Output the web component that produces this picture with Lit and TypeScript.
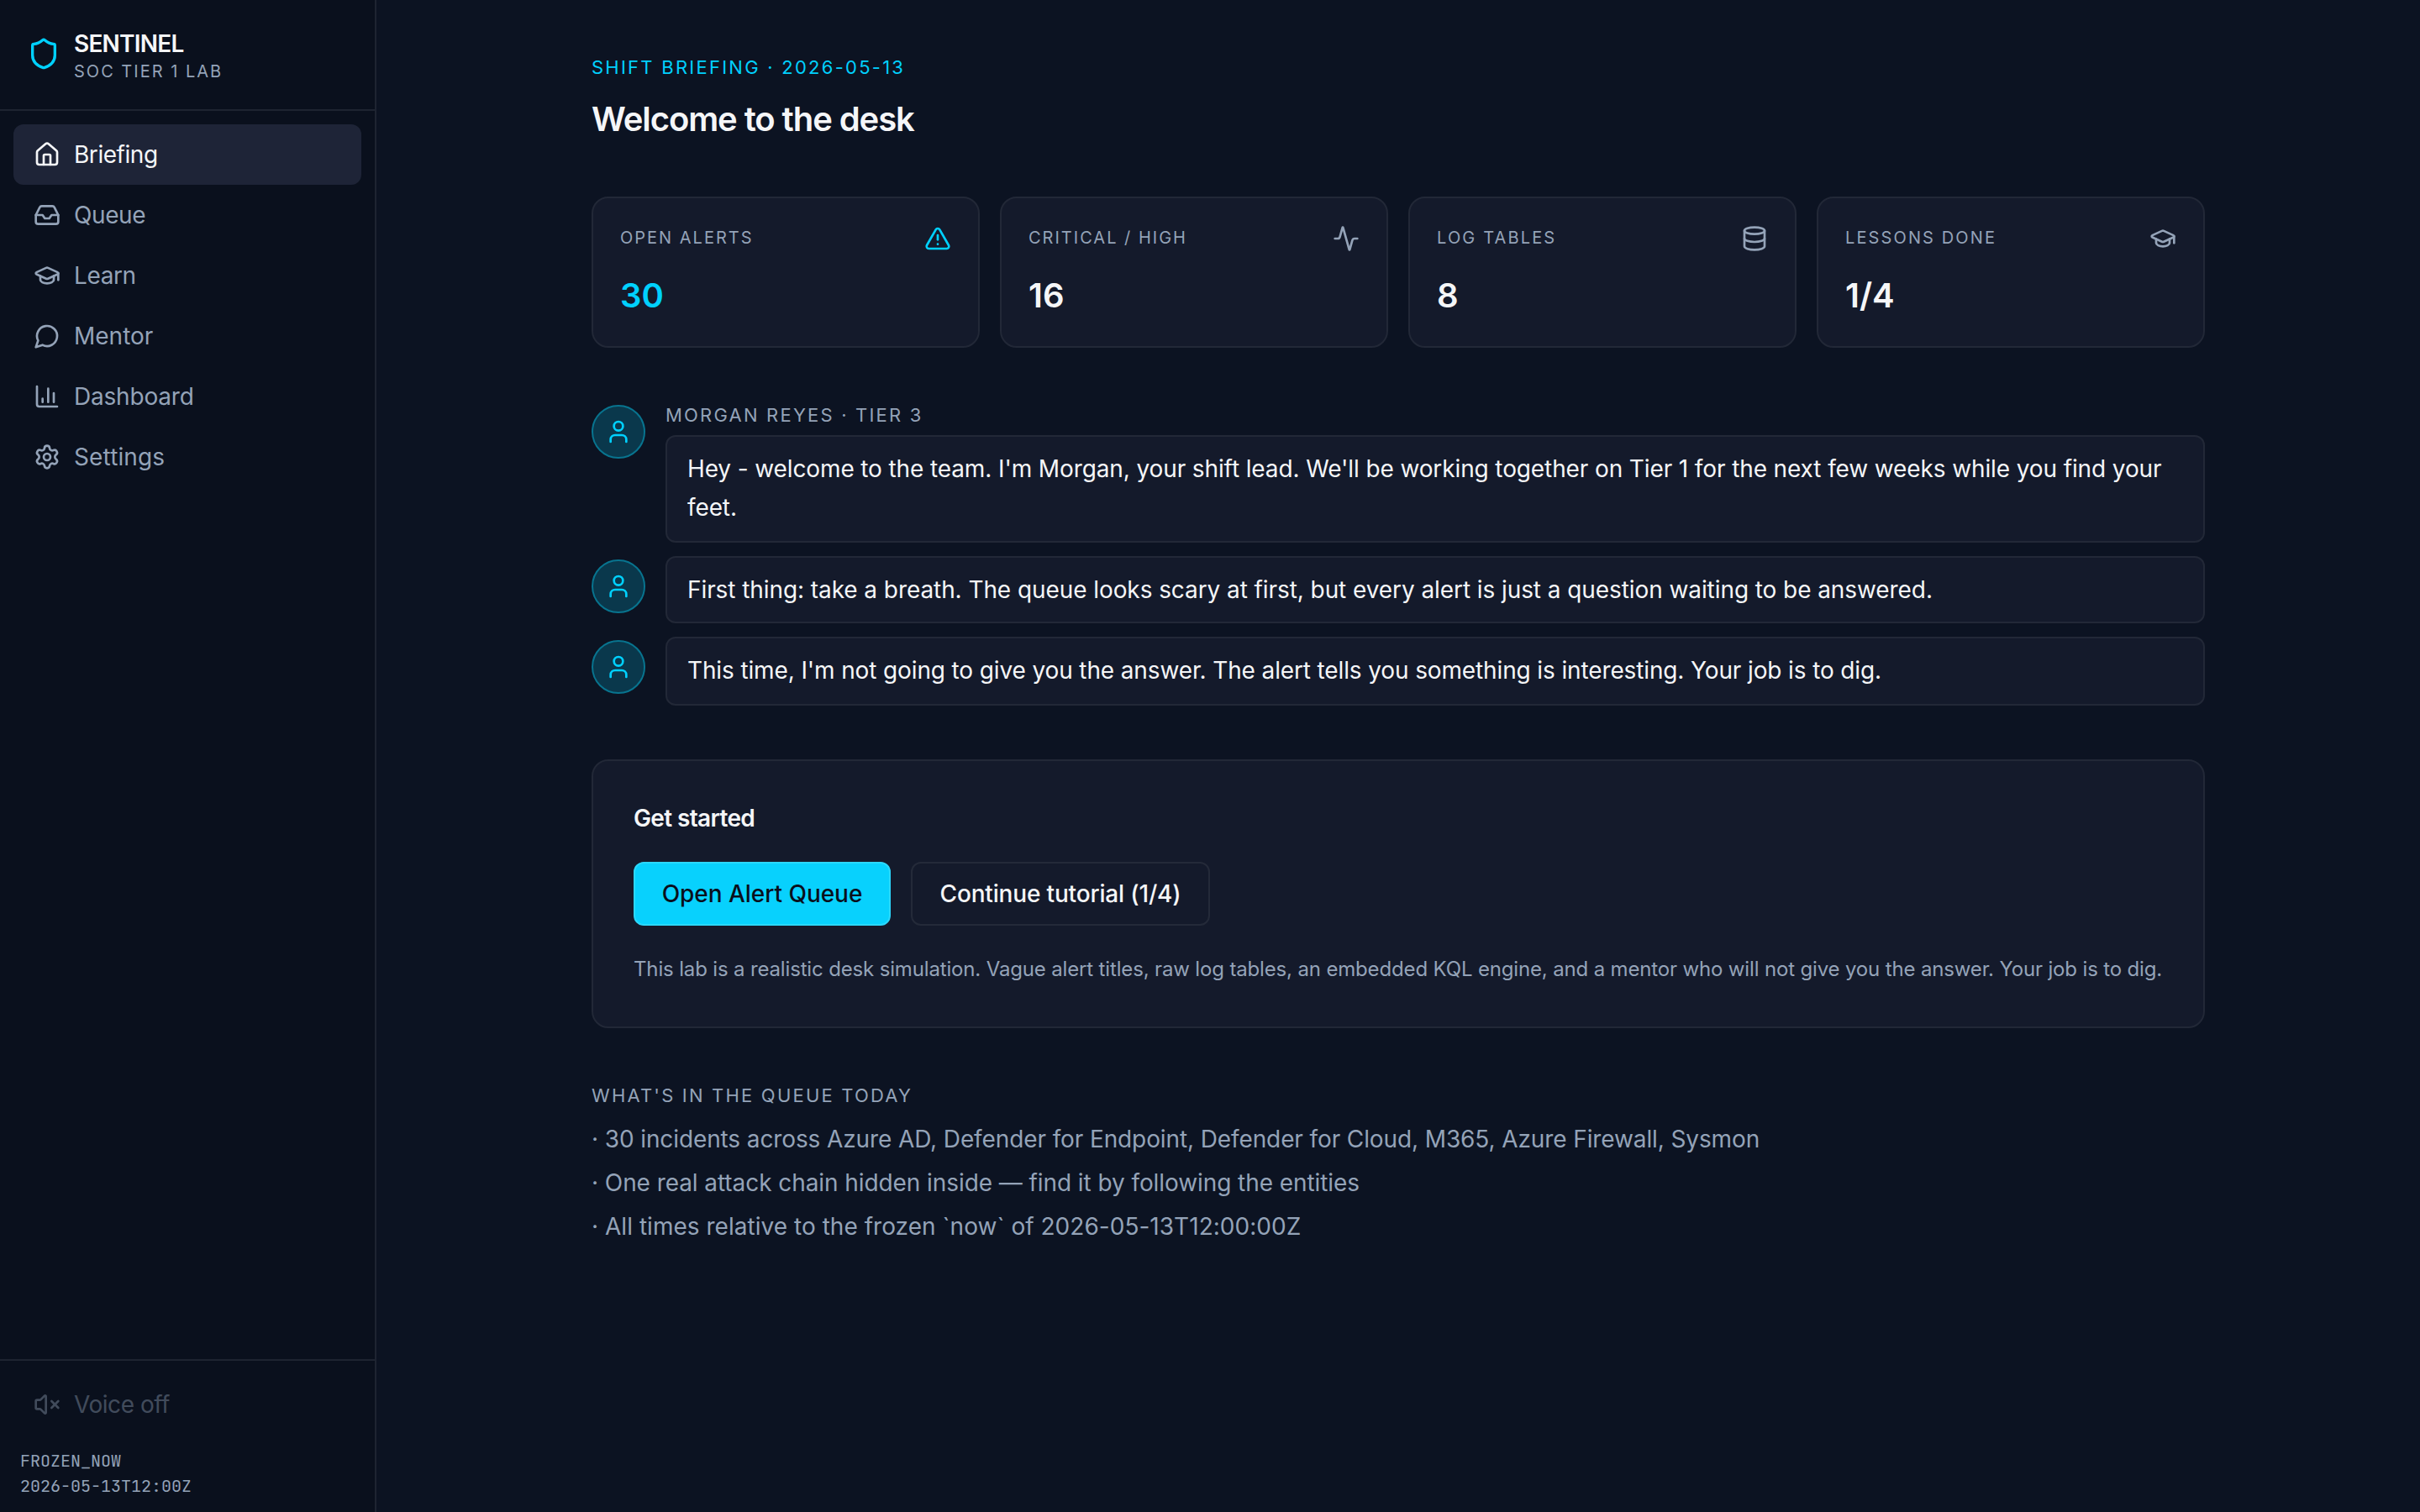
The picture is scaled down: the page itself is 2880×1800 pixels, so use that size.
import { LitElement, html, svg, css, type TemplateResult } from "lit";
import { customElement, property } from "lit/decorators.js";
import { classMap } from "lit/directives/class-map.js";
import { styleMap } from "lit/directives/style-map.js";

const icons: Record<string, TemplateResult> = {
  shield: svg`<path d="M20 13c0 5-3.5 7.5-7.66 8.95a1 1 0 0 1-.67-.01C7.5 20.5 4 18 4 13V6a1 1 0 0 1 1-1c2 0 4.5-1.2 6.24-2.72a1.17 1.17 0 0 1 1.52 0C14.51 3.81 17 5 19 5a1 1 0 0 1 1 1z"/>`,
  home: svg`<path d="M15 21v-8a1 1 0 0 0-1-1h-4a1 1 0 0 0-1 1v8"/><path d="M3 10a2 2 0 0 1 .709-1.528l7-5.999a2 2 0 0 1 2.582 0l7 5.999A2 2 0 0 1 21 10v9a2 2 0 0 1-2 2H5a2 2 0 0 1-2-2z"/>`,
  inbox: svg`<path d="M22 12h-6l-2 3h-4l-2-3H2"/><path d="M5.45 5.11 2 12v6a2 2 0 0 0 2 2h16a2 2 0 0 0 2-2v-6l-3.45-6.89A2 2 0 0 0 16.76 4H7.24a2 2 0 0 0-1.79 1.11z"/>`,
  cap: svg`<path d="M21.42 10.922a1 1 0 0 0-.019-1.838L12.83 5.18a2 2 0 0 0-1.66 0L2.6 9.08a1 1 0 0 0 0 1.832l8.57 3.908a2 2 0 0 0 1.66 0z"/><path d="M22 10v6"/><path d="M6 12.5V16a6 3 0 0 0 12 0v-3.5"/>`,
  chat: svg`<path d="M7.9 20A9 9 0 1 0 4 16.1L2 22Z"/>`,
  chart: svg`<path d="M3 3v16a2 2 0 0 0 2 2h16"/><path d="M18 17V9"/><path d="M13 17V5"/><path d="M8 17v-3"/>`,
  settings: svg`<path d="M9.671 4.136a2.34 2.34 0 0 1 4.659 0 2.34 2.34 0 0 0 3.319 1.915 2.34 2.34 0 0 1 2.33 4.033 2.34 2.34 0 0 0 0 3.831 2.34 2.34 0 0 1-2.33 4.033 2.34 2.34 0 0 0-3.319 1.915 2.34 2.34 0 0 1-4.659 0 2.34 2.34 0 0 0-3.32-1.915 2.34 2.34 0 0 1-2.33-4.033 2.34 2.34 0 0 0 0-3.831A2.34 2.34 0 0 1 6.35 6.051a2.34 2.34 0 0 0 3.319-1.915"/><circle cx="12" cy="12" r="3"/>`,
  mute: svg`<path d="M11 4.702a.705.705 0 0 0-1.203-.498L6.413 7.587A1.4 1.4 0 0 1 5.416 8H3a1 1 0 0 0-1 1v6a1 1 0 0 0 1 1h2.416a1.4 1.4 0 0 1 .997.413l3.383 3.384A.705.705 0 0 0 11 19.298z"/><path d="m22 9-6 6"/><path d="m16 9 6 6"/>`,
  alert: svg`<path d="m21.73 18-8-14a2 2 0 0 0-3.48 0l-8 14A2 2 0 0 0 4 21h16a2 2 0 0 0 1.73-3"/><path d="M12 9v4"/><path d="M12 17h.01"/>`,
  activity: svg`<path d="M22 12h-2.48a2 2 0 0 0-1.93 1.46l-2.35 8.36a.25.25 0 0 1-.48 0L9.24 2.18a.25.25 0 0 0-.48 0l-2.35 8.36A2 2 0 0 1 4.49 12H2"/>`,
  database: svg`<ellipse cx="12" cy="5" rx="9" ry="3"/><path d="M3 5v14a9 3 0 0 0 18 0V5"/><path d="M3 12a9 3 0 0 0 18 0"/>`,
  user: svg`<path d="M19 21v-2a4 4 0 0 0-4-4H9a4 4 0 0 0-4 4v2"/><circle cx="12" cy="7" r="4"/>`,
};

@customElement("line-icon")
class LineIcon extends LitElement {
  @property() name = "";

  static styles = css`
    :host {
      display: block;
      flex: none;
      width: 32px;
      height: 32px;
    }
    .glyph {
      display: block;
      width: 100%;
      height: 100%;
      fill: none;
      stroke: currentColor;
      stroke-width: 2;
      stroke-linecap: round;
      stroke-linejoin: round;
    }
  `;

  render() {
    return html`<svg class="glyph" viewBox="0 0 24 24">${icons[this.name]}</svg>`;
  }
}

/* "track" is the letter spacing of a text, in pixels. */
const tracking = (track = 0) => styleMap({ letterSpacing: `${track}px` });

const navItems = [
  { icon: "home", label: "Briefing", track: -0.45, active: true },
  { icon: "inbox", label: "Queue", track: -0.4 },
  { icon: "cap", label: "Learn", track: -0.4 },
  { icon: "chat", label: "Mentor", track: 0 },
  { icon: "chart", label: "Dashboard", track: -0.2 },
  { icon: "settings", label: "Settings", track: 0.12 },
];

const stats = [
  { label: "OPEN ALERTS", value: "30", icon: "alert", track: 2, accent: true },
  { label: "CRITICAL / HIGH", value: "16", icon: "activity", track: 2 },
  { label: "LOG TABLES", value: "8", icon: "database", track: 2.15 },
  { label: "LESSONS DONE", value: "1/4", icon: "cap", track: 2.12 },
];

const messages = [
  {
    from: "MORGAN REYES · TIER 3",
    text: "Hey - welcome to the team. I'm Morgan, your shift lead. We'll be working together on Tier 1 for the next few weeks while you find your feet.",
    size: "tall",
    track: -0.116,
  },
  {
    text: "First thing: take a breath. The queue looks scary at first, but every alert is just a question waiting to be answered.",
    size: "short",
    track: -0.078,
  },
  {
    text: "This time, I'm not going to give you the answer. The alert tells you something is interesting. Your job is to dig.",
    size: "medium",
    track: -0.129,
  },
];

const queueNotes = [
  {
    text: "30 incidents across Azure AD, Defender for Endpoint, Defender for Cloud, M365, Azure Firewall, Sysmon",
    track: -0.11,
  },
  { text: "One real attack chain hidden inside — find it by following the entities", track: -0.076 },
  { text: "All times relative to the frozen `now` of 2026-05-13T12:00:00Z", track: 0.03 },
];

@customElement("app-root")
class AppRoot extends LitElement {
  static styles = css`
    :host {
      --bg: #0c1322;
      --side: #0a101d;
      --card: #141a2b;
      --line: #1e2431;
      --card-line: #222837;
      --text: #f5f6f8;
      --muted: #94a3b8;
      --cyan: #00d1ff;
      display: flex;
      height: 100vh;
      background: var(--bg);
      color: var(--text);
      font: 400 28px/42px Inter, "Liberation Sans", sans-serif;
    }
    * {
      box-sizing: border-box;
      margin: 0;
    }
    .sidebar {
      display: flex;
      flex-direction: column;
      flex: none;
      width: 448px;
      background: var(--side);
      border-right: 2px solid var(--line);
    }
    .brand {
      display: flex;
      align-items: flex-start;
      gap: 16px;
      height: 132px;
      padding: 32px;
      border-bottom: 2px solid var(--line);
    }
    .brand-icon {
      width: 40px;
      height: 40px;
      margin-top: 12px;
      color: var(--cyan);
    }
    .brand-name {
      font-weight: 600;
      line-height: 40px;
      letter-spacing: -0.78px;
    }
    .brand-sub {
      font-size: 20px;
      line-height: 26px;
      letter-spacing: 2px;
      color: var(--muted);
    }
    .nav {
      flex: 1;
      padding: 16px;
    }
    .item {
      display: flex;
      align-items: center;
      gap: 16px;
      height: 72px;
      padding: 0 24px;
      border-radius: 12px;
      color: var(--muted);
    }
    .item.active {
      background: #1e2437;
      color: var(--text);
    }
    .foot {
      padding: 16px;
      border-top: 2px solid var(--line);
    }
    .item.off {
      opacity: 0.4;
      letter-spacing: -0.45px;
    }
    .clock {
      padding: 16px 8px 0;
      font: 20px/30px "JetBrains Mono", "Liberation Mono", monospace;
      color: var(--muted);
    }
    .main {
      flex: 1;
      display: flex;
      justify-content: center;
      padding-top: 64px;
    }
    .content {
      width: 1920px;
    }
    .eyebrow {
      font-size: 22px;
      line-height: 32px;
      letter-spacing: 2.2px;
      color: var(--muted);
    }
    .eyebrow.accent {
      letter-spacing: 2.25px;
      color: var(--cyan);
    }
    .title {
      margin: 16px 0 62px;
      font-size: 40px;
      line-height: 60px;
      font-weight: 600;
      letter-spacing: -1.08px;
    }
    .stats {
      display: grid;
      grid-template-columns: repeat(4, 1fr);
      gap: 24px;
      margin-bottom: 64px;
    }
    .stat,
    .panel {
      background: var(--card);
      border: 2px solid var(--card-line);
      border-radius: 20px;
    }
    .stat {
      height: 180px;
      padding: 32px;
    }
    .stat-head {
      display: flex;
      justify-content: space-between;
      color: var(--muted);
    }
    .stat-label {
      font-size: 20px;
      line-height: 30px;
    }
    .stat-value {
      margin-top: 24px;
      font-size: 40px;
      line-height: 56px;
      font-weight: 600;
    }
    .stat.accent .stat-icon,
    .stat.accent .stat-value {
      color: var(--cyan);
    }
    .thread {
      display: flex;
      flex-direction: column;
      gap: 16px;
      margin-bottom: 64px;
    }
    .message {
      display: flex;
      gap: 24px;
    }
    .avatar {
      display: grid;
      place-items: center;
      flex: none;
      width: 64px;
      height: 64px;
      margin-top: 4px;
      border-radius: 50%;
      border: 2px solid #08748f;
      background: #0a384c;
      color: var(--cyan);
    }
    .body {
      flex: 1;
    }
    .from {
      margin-bottom: 8px;
    }
    .bubble {
      padding: 15px 24px;
      line-height: 46px;
      background: var(--card);
      border: 2px solid var(--card-line);
      border-radius: 12px;
    }
    .bubble.tall {
      height: 128px;
    }
    .bubble.short {
      height: 80px;
    }
    .bubble.medium {
      height: 82px;
    }
    .panel {
      height: 320px;
      padding: 48px;
      margin-bottom: 64px;
    }
    .panel-title {
      font-size: 28px;
      line-height: 40px;
      font-weight: 600;
      letter-spacing: -0.64px;
    }
    .actions {
      display: flex;
      gap: 24px;
      margin: 32px 0;
    }
    .button {
      width: 356px;
      height: 76px;
      padding: 0;
      font: inherit;
      font-weight: 500;
      letter-spacing: -0.16px;
      white-space: nowrap;
      color: var(--text);
      background: var(--card);
      border: 2px solid #242a39;
      border-radius: 12px;
    }
    .button.primary {
      width: 306px;
      letter-spacing: -0.04px;
      color: #0a0f1c;
      background: #08d1fd;
      border-color: #2bd8fd;
    }
    .hint {
      font-size: 24px;
      line-height: 40px;
      letter-spacing: -0.154px;
      color: var(--muted);
      white-space: nowrap;
    }
    .notes {
      margin-top: 10px;
      padding: 0;
      list-style: none;
      line-height: 52px;
      color: var(--muted);
    }
  `;

  render() {
    return html`
      <aside class="sidebar">
        <div class="brand">
          <line-icon class="brand-icon" name="shield"></line-icon>
          <div>
            <div class="brand-name">SENTINEL</div>
            <div class="brand-sub">SOC TIER 1 LAB</div>
          </div>
        </div>
        <nav class="nav">
          ${navItems.map(
            (n) => html`<div class=${classMap({ item: true, active: !!n.active })}>
              <line-icon name=${n.icon}></line-icon><span style=${tracking(n.track)}>${n.label}</span>
            </div>`
          )}
        </nav>
        <div class="foot">
          <div class="item off"><line-icon name="mute"></line-icon><span>Voice off</span></div>
          <div class="clock">FROZEN_NOW<br />2026-05-13T12:00Z</div>
        </div>
      </aside>
      <main class="main">
        <div class="content">
          <div class="eyebrow accent">SHIFT BRIEFING · 2026-05-13</div>
          <h1 class="title">Welcome to the desk</h1>
          <section class="stats">
            ${stats.map(
              (s) => html`<div class=${classMap({ stat: true, accent: !!s.accent })}>
                <div class="stat-head">
                  <span class="stat-label" style=${tracking(s.track)}>${s.label}</span>
                  <line-icon class="stat-icon" name=${s.icon}></line-icon>
                </div>
                <div class="stat-value">${s.value}</div>
              </div>`
            )}
          </section>
          <section class="thread">
            ${messages.map(
              (m) => html`<div class="message">
                <div class="avatar"><line-icon name="user"></line-icon></div>
                <div class="body">
                  ${m.from ? html`<div class="eyebrow from">${m.from}</div>` : null}
                  <div class="bubble ${m.size}" style=${tracking(m.track)}>${m.text}</div>
                </div>
              </div>`
            )}
          </section>
          <section class="panel">
            <h2 class="panel-title">Get started</h2>
            <div class="actions">
              <button class="button primary">Open Alert Queue</button>
              <button class="button">Continue tutorial (1/4)</button>
            </div>
            <p class="hint">
              This lab is a realistic desk simulation. Vague alert titles, raw log tables, an embedded KQL engine, and a mentor who will not give you the answer. Your job is to dig.
            </p>
          </section>
          <section>
            <div class="eyebrow">WHAT'S IN THE QUEUE TODAY</div>
            <ul class="notes">
              ${queueNotes.map((n) => html`<li style=${tracking(n.track)}>· ${n.text}</li>`)}
            </ul>
          </section>
        </div>
      </main>
    `;
  }
}
